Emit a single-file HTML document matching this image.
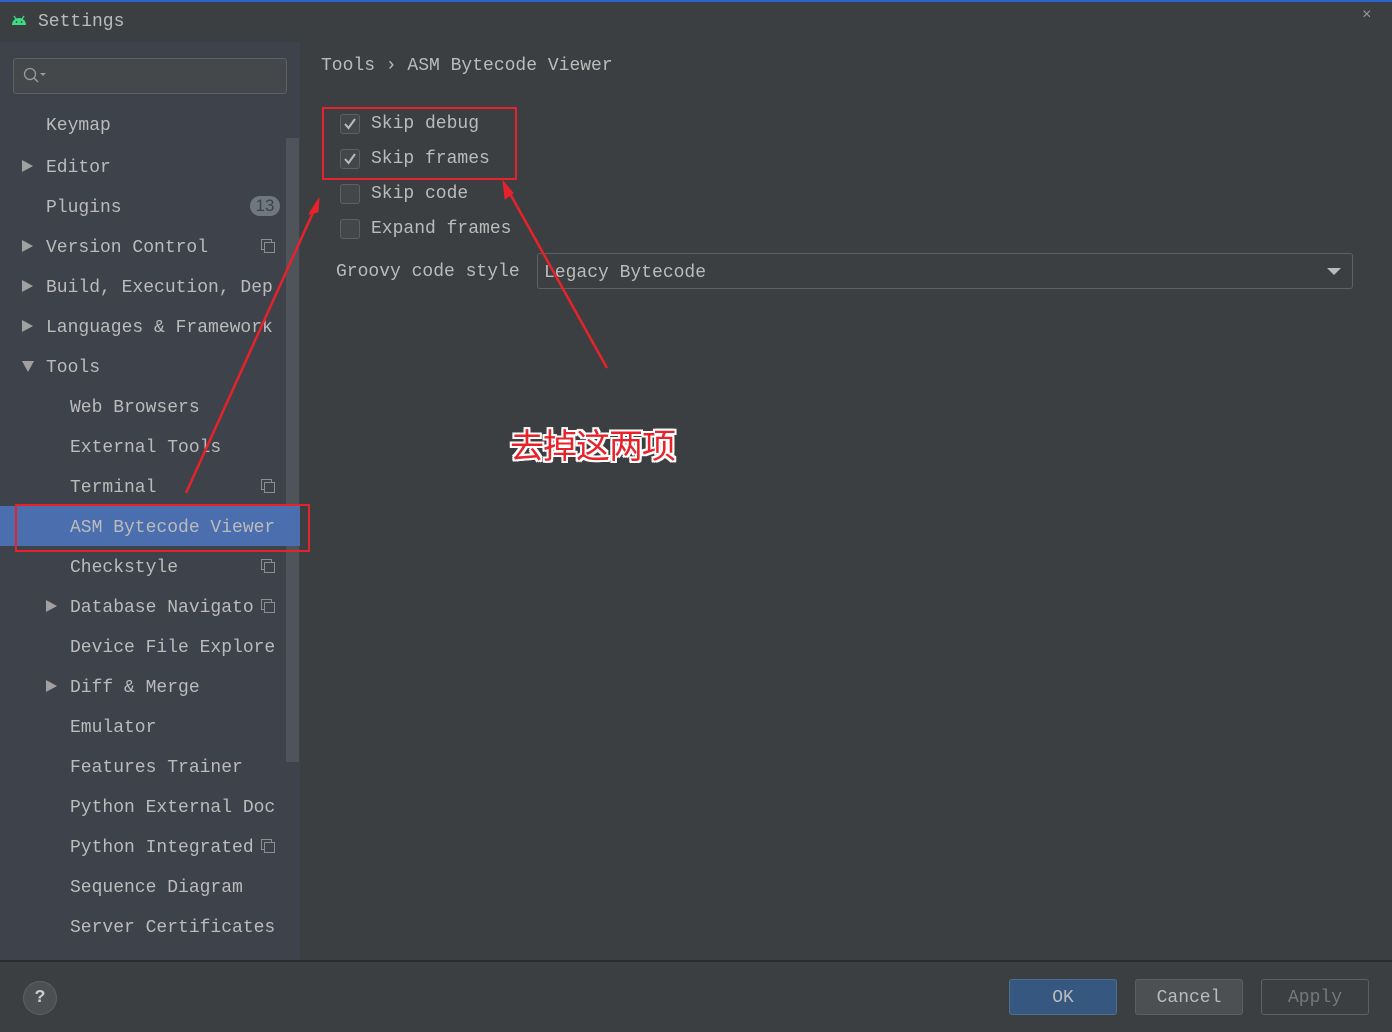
<!DOCTYPE html><html><head><style>
body{margin:0;width:1392px;height:1032px;background:#3c3f41;font-family:"Liberation Mono",monospace;color:#bbbbbb;font-size:18px;position:relative;overflow:hidden}
.a{position:absolute;white-space:nowrap}
#top{position:absolute;left:0;top:0;width:1392px;height:2px;background:#2f65ca}
#side{position:absolute;left:0;top:42px;width:300px;height:918px;background:#3e424a}
.r{position:absolute;left:0;width:300px;height:40px;line-height:40px}
.r span{position:absolute;top:2px}
.tri{position:absolute;width:0;height:0;border-top:6px solid transparent;border-bottom:6px solid transparent;border-left:11px solid #a0a0a0;top:14px}
.cp{position:absolute;left:261px;top:13px;width:9px;height:9px;border:1px solid #8a8d91}
.cp:after{content:"";position:absolute;left:2px;top:2px;width:9px;height:9px;border:1px solid #8a8d91;background:#3e424a}
.cb{position:absolute;left:340px;width:18px;height:18px;border:1px solid #5e6163;border-radius:3px;background:#43474a}
.btn{position:absolute;top:979px;height:34px;width:106px;border:1px solid #5e6060;border-radius:3px;background:#4c5052;text-align:center;line-height:37px}
</style></head><body>
<div id="top"></div>
<svg class="a" style="left:11px;top:14px" width="16" height="12" viewBox="0 0 16 12"><path d="M1 11 A7 7 0 0 1 15 11 Z" fill="#3ddc84"/><line x1="3" y1="2" x2="5" y2="5" stroke="#3ddc84" stroke-width="1.3"/><line x1="13" y1="2" x2="11" y2="5" stroke="#3ddc84" stroke-width="1.3"/><circle cx="5.5" cy="8" r="0.9" fill="#3c3f41"/><circle cx="10.5" cy="8" r="0.9" fill="#3c3f41"/></svg>
<div class="a" style="left:38px;top:12px">Settings</div>
<div class="a" style="left:1362px;top:6px;color:#999;font-size:16px">×</div>
<div id="side">
<div class="a" style="left:13px;top:16px;width:272px;height:34px;border:1px solid #5e6163;border-radius:3px;background:#45484a"></div>
<svg class="a" style="left:22px;top:25px" width="26" height="18"><circle cx="8" cy="7" r="5.5" stroke="#999" fill="none" stroke-width="1.3"/><line x1="12" y1="11" x2="16" y2="15" stroke="#999" stroke-width="1.5"/><path d="M18 6 L24 6 L21 9 Z" fill="#999"/></svg>
<div class="a" style="left:286px;top:96px;width:13px;height:624px;background:#4f535a"></div>
</div>
<div class="r" style="top:104px"><span style="left:46px">Keymap</span></div>
<div class="r" style="top:146px"><div class="tri" style="left:22px"></div><span style="left:46px">Editor</span></div>
<div class="r" style="top:186px"><span style="left:46px">Plugins</span><span style="left:250px;top:10px;width:30px;height:20px;line-height:20px;border-radius:10px;background:#6f7780;color:#3e424a;text-align:center;font-family:'Liberation Sans';font-size:17px">13</span></div>
<div class="r" style="top:226px"><div class="tri" style="left:22px"></div><span style="left:46px">Version Control</span><div class="cp"></div></div>
<div class="r" style="top:266px"><div class="tri" style="left:22px"></div><span style="left:46px">Build, Execution, Dep</span></div>
<div class="r" style="top:306px"><div class="tri" style="left:22px"></div><span style="left:46px">Languages &amp; Framework</span></div>
<div class="r" style="top:346px"><div class="tri" style="left:22px;border-left:6px solid transparent;border-right:6px solid transparent;border-top:11px solid #a0a0a0;border-bottom:0;top:15px"></div><span style="left:46px">Tools</span></div>
<div class="r" style="top:386px"><span style="left:70px">Web Browsers</span></div>
<div class="r" style="top:426px"><span style="left:70px">External Tools</span></div>
<div class="r" style="top:466px"><span style="left:70px">Terminal</span><div class="cp"></div></div>
<div class="r" style="top:506px;background:#4b6eaf"><span style="left:70px">ASM Bytecode Viewer</span></div>
<div class="r" style="top:546px"><span style="left:70px">Checkstyle</span><div class="cp"></div></div>
<div class="r" style="top:586px"><div class="tri" style="left:46px"></div><span style="left:70px">Database Navigato</span><div class="cp"></div></div>
<div class="r" style="top:626px"><span style="left:70px">Device File Explore</span></div>
<div class="r" style="top:666px"><div class="tri" style="left:46px"></div><span style="left:70px">Diff &amp; Merge</span></div>
<div class="r" style="top:706px"><span style="left:70px">Emulator</span></div>
<div class="r" style="top:746px"><span style="left:70px">Features Trainer</span></div>
<div class="r" style="top:786px"><span style="left:70px">Python External Doc</span></div>
<div class="r" style="top:826px"><span style="left:70px">Python Integrated</span><div class="cp"></div></div>
<div class="r" style="top:866px"><span style="left:70px">Sequence Diagram</span></div>
<div class="r" style="top:906px"><span style="left:70px">Server Certificates</span></div>
<div class="a" style="left:0;top:960px;width:1392px;height:2px;background:#2b2b2b"></div>
<div class="a" style="left:0;top:962px;width:1392px;height:70px;background:#3c3f41"></div>
<div class="a" style="left:321px;top:56px">Tools › ASM Bytecode Viewer</div>
<div class="cb" style="top:114px"></div><svg class="a" style="left:342px;top:116px" width="16" height="16"><path d="M3 8 L6.5 12 L13 3" stroke="#bbb" stroke-width="2" fill="none"/></svg><div class="a" style="left:371px;top:114px">Skip debug</div>
<div class="cb" style="top:149px"></div><svg class="a" style="left:342px;top:151px" width="16" height="16"><path d="M3 8 L6.5 12 L13 3" stroke="#bbb" stroke-width="2" fill="none"/></svg><div class="a" style="left:371px;top:149px">Skip frames</div>
<div class="cb" style="top:184px"></div><div class="a" style="left:371px;top:184px">Skip code</div>
<div class="cb" style="top:219px"></div><div class="a" style="left:371px;top:219px">Expand frames</div>
<div class="a" style="left:336px;top:262px">Groovy code style</div>
<div class="a" style="left:537px;top:253px;width:814px;height:34px;border:1px solid #5e6163;border-radius:3px;background:#3c3f41"></div>
<div class="a" style="left:544px;top:263px">Legacy Bytecode</div>
<svg class="a" style="left:1327px;top:268px" width="14" height="8"><path d="M0 0H14L7 7Z" fill="#bbb"/></svg>
<div class="a" style="left:23px;top:981px;width:32px;height:32px;border-radius:50%;background:#4c5052;border:1px solid #5e6060;text-align:center;line-height:32px;font-weight:bold;color:#ccc">?</div>
<div class="btn" style="left:1009px;background:#365880;border-color:#4c708c">OK</div>
<div class="btn" style="left:1135px">Cancel</div>
<div class="btn" style="left:1261px;background:#3c3f41;color:#777">Apply</div>
<div class="a" style="left:322px;top:107px;width:191px;height:69px;border:2px solid #e8222a"></div>
<div class="a" style="left:15px;top:504px;width:291px;height:44px;border:2px solid #e8222a"></div>
<svg class="a" style="left:0;top:0" width="1392" height="1032"><g stroke="#e8222a" stroke-width="2.5" fill="#e8222a"><line x1="186" y1="493" x2="316" y2="206"/><path d="M319 198 L309 214 L318 212 Z" stroke-width="1"/><line x1="607" y1="368" x2="508" y2="190"/><path d="M503 181 L505 199 L513 193 Z" stroke-width="1"/></g></svg>
<div class="a" style="left:510px;top:419px;font-family:'Noto Sans CJK SC',sans-serif;font-size:34px;color:#e8222a;text-shadow:2px 0 #fff,-2px 0 #fff,0 2px #fff,0 -2px #fff,2px 2px #fff,-2px -2px #fff,2px -2px #fff,-2px 2px #fff;letter-spacing:-1px">去掉这两项</div>
</body></html>
